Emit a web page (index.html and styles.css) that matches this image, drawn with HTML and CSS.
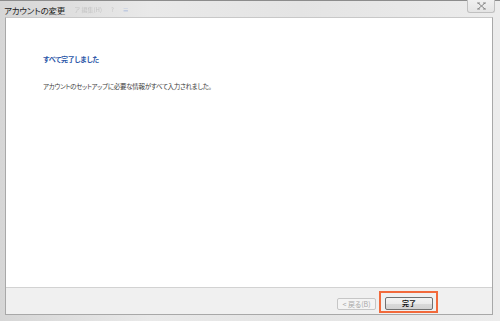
FILE: index.html
```html
<!DOCTYPE html>
<html lang="ja">
<head>
<meta charset="utf-8">
<link rel="stylesheet" href="styles.css">
</head>
<body>
<div class="window">
  <div class="titlebar">
    <span class="title">アカウントの変更</span>
    <span class="ghost">ア 編集(H)</span>
    <span class="ghost">?</span>
    <span class="ghost blue">≡</span>
    <div class="close">
      <svg width="11" height="8" viewBox="0 0 11 8"><path d="M2 1 L9 7 M9 1 L2 7 M1 1 H4 M7 1 H10 M1 7 H4 M7 7 H10" stroke="#8a8a8a" stroke-width="1" fill="none"/></svg>
    </div>
  </div>
  <div class="frame">
    <div class="client">
      <h1 class="heading">すべて完了しました</h1>
      <p class="message">アカウントのセットアップに必要な情報がすべて入力されました。</p>
    </div>
    <div class="footer">
      <button class="btn disabled">&lt; 戻る(B)</button>
      <div class="highlight">
        <button class="btn primary">完了</button>
      </div>
    </div>
  </div>
</div>
</body>
</html>
```

FILE: styles.css
```css
* { box-sizing: border-box; }
html, body {
  margin: 0;
  padding: 0;
  width: 500px;
  height: 321px;
  overflow: hidden;
  background: #dcdcdc;
  font-family: "Noto Sans CJK JP", "Noto Sans", sans-serif;
}
.window {
  width: 500px;
  height: 321px;
  display: flex;
  flex-direction: column;
  background: linear-gradient(90deg, #d6d6d6 0%, #e9e9e9 30%, #e4e4e4 60%, #ececec 100%);
  border-top: 1px solid #8c8c8c;
}
.titlebar {
  height: 16px;
  flex: none;
  display: flex;
  align-items: center;
  padding-left: 4px;
  gap: 9px;
  position: relative;
}
.title {
  font-size: 8.5px;
  color: #222;
  font-feature-settings: "palt";
  letter-spacing: -0.2px;
  margin-top: 1px;
}
.ghost {
  font-size: 6px;
  color: #c4c4c4;
  filter: blur(0.4px);
}
.ghost.blue { color: #9fb2da; }
.close {
  position: absolute;
  right: 5px;
  top: -1px;
  width: 28px;
  height: 13px;
  border: 1px solid #c0c0c0;
  border-top: none;
  border-radius: 0 0 3px 3px;
  background: linear-gradient(#f0f0f0, #e4e4e4);
  display: flex;
  align-items: center;
  justify-content: center;
}
.frame {
  flex: 1;
  margin: 0 7px 6px 5px;
  display: flex;
  flex-direction: column;
  border: 1px solid #a8a8a8;
  border-top-color: #c8c8c8;
  min-height: 0;
}
.client {
  flex: 1;
  background: #fff;
  padding: 36px 0 0 37px;
  border-bottom: 1px solid #d2d2d2;
}
.heading {
  margin: 0;
  font-size: 7px;
  font-weight: bold;
  color: #2a56a8;
  font-feature-settings: "palt";
  letter-spacing: -0.2px;
  line-height: 10px;
}
.message {
  margin: 17px 0 0;
  font-size: 6.5px;
  color: #3c3c3c;
  font-feature-settings: "palt";
  letter-spacing: -0.3px;
  line-height: 10px;
}
.footer {
  height: 26px;
  flex: none;
  background: #f0f0f0;
  display: flex;
  align-items: flex-start;
  justify-content: flex-end;
  padding-right: 54px;
}
.btn {
  font-family: inherit;
  font-size: 7px;
  padding: 0;
  border-radius: 2px;
  font-feature-settings: "palt";
}
.btn.disabled {
  width: 39px;
  height: 12px;
  line-height: 10px;
  margin-top: 10px;
  margin-right: 3px;
  color: #a8a8a8;
  background: #f4f4f4;
  border: 1px solid #c6c6c6;
}
.highlight {
  margin-top: 3px;
  padding: 3.5px 3px 1.5px 4px;
  border: 2px solid #f26a3c;
}
.btn.primary {
  display: block;
  width: 48px;
  height: 13px;
  line-height: 11px;
  color: #111;
  font-weight: bold;
  background: linear-gradient(#f4f4f4 0%, #ebebeb 50%, #dadada 51%, #d2d2d2 100%);
  border: 1px solid #707070;
}
```
